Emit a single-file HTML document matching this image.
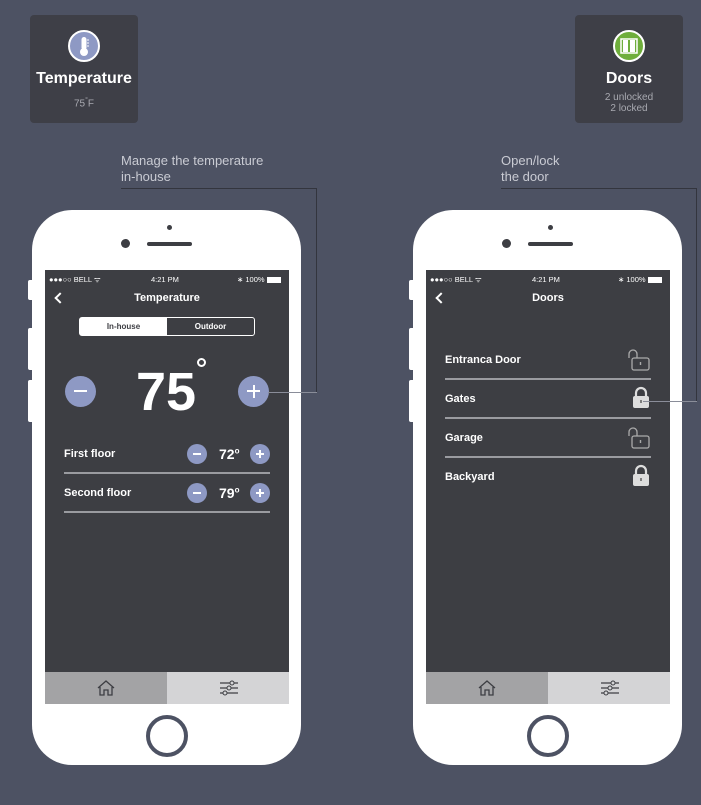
<!DOCTYPE html>
<html><head><meta charset="utf-8"><style>
*{margin:0;padding:0;box-sizing:border-box}
body{width:701px;height:805px;background:#4d5263;position:relative;overflow:hidden;font-family:"Liberation Sans",Arial,sans-serif;color:#fff}
.abs{position:absolute}
.card{position:absolute;top:15px;width:108px;height:108px;background:#3e3f47;border-radius:4px;text-align:center}
.card .ic{position:absolute;left:38px;top:15px;width:32px;height:32px;border-radius:50%;border:2px solid #fff}
.card .t{position:absolute;top:55px;width:100%;font-weight:bold;font-size:16px;line-height:18px}
.card .s{position:absolute;top:79px;width:100%;font-size:10px;color:#a8a9b0;line-height:11px}
.note{position:absolute;top:153px;font-size:13px;color:#c9cbd3;line-height:16px}
.line{position:absolute;background:#33353e}
.phone{position:absolute;top:210px;width:269px;height:555px;background:#fff;border-radius:40px}
.btn{position:absolute;width:4px;background:#fff;border-radius:2px 0 0 2px}
.screen{position:absolute;left:13px;top:60px;width:244px;height:434px;background:#3d3e43}
.sb{position:absolute;top:5px;font-size:7.5px;color:#fff}
.hdr{position:absolute;top:22px;width:100%;text-align:center;font-weight:bold;font-size:11px}
.back{position:absolute;left:11px;top:24px;width:8px;height:8px;border-left:2px solid #fff;border-bottom:2px solid #fff;transform:rotate(45deg)}
.tab{position:absolute;top:402px;height:32px;width:122px}
.home{position:absolute;left:114px;top:505px;width:42px;height:42px;border-radius:50%;border:4px solid #4d5263}
.circ{position:absolute;border-radius:50%;background:#8e99c4}
.row{position:absolute;left:19px;width:206px;font-weight:bold;font-size:11px}
.hr{position:absolute;left:19px;width:206px;height:2px;background:#9a9ba0}
</style></head><body>

<div class="card" style="left:30px">
 <div class="ic" style="background:#8e99c4">
  <svg width="28" height="28" viewBox="0 0 28 28"><rect x="11.5" y="5" width="5" height="13" rx="2.5" fill="#fff"/><circle cx="14" cy="20" r="4" fill="#fff"/><path d="M17 8h2M17 11h2M17 14h2" stroke="#fff" stroke-width="1"/></svg>
 </div>
 <div class="t">Temperature</div>
 <div class="s" style="top:80px">75<sup style="font-size:7px">°</sup>F</div>
</div>
<div class="card" style="left:575px">
 <div class="ic" style="background:#6fae3c">
  <svg width="28" height="28" viewBox="0 0 28 28"><rect x="6" y="7" width="16" height="14" fill="none" stroke="#fff" stroke-width="1.5"/><rect x="8" y="8" width="5" height="12" fill="#fff"/><rect x="15" y="8" width="5" height="12" fill="#fff"/></svg>
 </div>
 <div class="t">Doors</div>
 <div class="s" style="top:77px">2 unlocked<br>2 locked</div>
</div>

<div class="note" style="left:121px">Manage the temperature<br>in-house</div>
<div class="note" style="left:501px">Open/lock<br>the door</div>
<div class="line" style="left:121px;top:188px;width:196px;height:1px"></div>
<div class="line" style="left:316px;top:188px;width:1px;height:205px"></div>
<div class="line" style="left:501px;top:188px;width:196px;height:1px"></div>
<div class="line" style="left:696px;top:188px;width:1px;height:214px"></div>

<!-- phone 1 -->
<div class="btn" style="left:28px;top:280px;height:20px"></div>
<div class="btn" style="left:28px;top:328px;height:42px"></div>
<div class="btn" style="left:28px;top:380px;height:42px"></div>
<div class="phone" style="left:32px">
 <div class="abs" style="left:135px;top:15px;width:5px;height:5px;border-radius:50%;background:#3d3e43"></div>
 <div class="abs" style="left:89px;top:29px;width:9px;height:9px;border-radius:50%;background:#3d3e43"></div>
 <div class="abs" style="left:115px;top:32px;width:45px;height:4px;border-radius:2px;background:#3d3e43"></div>
 <div class="screen">
  <div class="sb" style="left:4px">●●●○○ BELL ᯤ</div>
  <div class="sb" style="left:106px">4:21 PM</div>
  <div class="sb" style="left:192px">∗ 100% <span style="display:inline-block;width:14px;height:6px;background:#fff;vertical-align:middle"></span></div>
  <div class="back"></div>
  <div class="hdr">Temperature</div>
  <div class="abs" style="left:34px;top:47px;width:176px;height:19px;border:1px solid #fff;border-radius:3px;font-size:8px;font-weight:bold">
   <div class="abs" style="left:0;top:0;width:87px;height:17px;background:#fff;color:#3d3e43;text-align:center;line-height:17px">In-house</div>
   <div class="abs" style="left:87px;top:0;width:87px;height:17px;text-align:center;line-height:17px">Outdoor</div>
  </div>
  <div class="circ" style="left:20px;top:106px;width:31px;height:31px"><div class="abs" style="left:9px;top:14px;width:13px;height:2px;background:#fff"></div></div>
  <div class="circ" style="left:193px;top:106px;width:31px;height:31px"><div class="abs" style="left:9px;top:14px;width:13px;height:2px;background:#fff"></div><div class="abs" style="left:14.5px;top:9px;width:2px;height:13px;background:#fff"></div></div>
  <div class="abs" style="left:91px;top:92px;font-size:54px;font-weight:bold;line-height:60px">75</div>
  <div class="abs" style="left:152px;top:88px;width:9px;height:9px;border-radius:50%;border:2px solid #fff"></div>
  <div class="row" style="top:178px">First floor</div>
  <div class="circ" style="left:142px;top:174px;width:20px;height:20px"><div class="abs" style="left:6px;top:9px;width:8px;height:2px;background:#fff"></div></div>
  <div class="abs" style="left:174px;top:176px;font-size:14px;font-weight:bold">72<sup style="font-size:8px">o</sup></div>
  <div class="circ" style="left:205px;top:174px;width:20px;height:20px"><div class="abs" style="left:6px;top:9px;width:8px;height:2px;background:#fff"></div><div class="abs" style="left:9px;top:6px;width:2px;height:8px;background:#fff"></div></div>
  <div class="hr" style="top:202px"></div>
  <div class="row" style="top:217px">Second floor</div>
  <div class="circ" style="left:142px;top:213px;width:20px;height:20px"><div class="abs" style="left:6px;top:9px;width:8px;height:2px;background:#fff"></div></div>
  <div class="abs" style="left:174px;top:215px;font-size:14px;font-weight:bold">79<sup style="font-size:8px">o</sup></div>
  <div class="circ" style="left:205px;top:213px;width:20px;height:20px"><div class="abs" style="left:6px;top:9px;width:8px;height:2px;background:#fff"></div><div class="abs" style="left:9px;top:6px;width:2px;height:8px;background:#fff"></div></div>
  <div class="hr" style="top:241px"></div>
  <div class="tab" style="left:0;background:#a3a3a5"><svg class="abs" style="left:51px;top:8px" width="20" height="16" viewBox="0 0 20 16"><path d="M2 8L10 1L18 8M4 7V15H8V10H12V15H16V7" fill="none" stroke="#3d3e43" stroke-width="1.3"/></svg></div>
  <div class="tab" style="left:122px;background:#d4d4d6"><svg class="abs" style="left:52px;top:8px" width="20" height="16" viewBox="0 0 20 16"><path d="M1 3H19M1 8H19M1 13H19" stroke="#3d3e43" stroke-width="1.3"/><circle cx="13" cy="3" r="2" fill="#d4d4d6" stroke="#3d3e43"/><circle cx="10" cy="8" r="2" fill="#d4d4d6" stroke="#3d3e43"/><circle cx="6" cy="13" r="2" fill="#d4d4d6" stroke="#3d3e43"/></svg></div>
 </div>
 <div class="home"></div>
</div>
<div class="line" style="left:268px;top:392px;width:49px;height:1px;background:#8a8d99"></div>

<!-- phone 2 -->
<div class="btn" style="left:409px;top:280px;height:20px"></div>
<div class="btn" style="left:409px;top:328px;height:42px"></div>
<div class="btn" style="left:409px;top:380px;height:42px"></div>
<div class="phone" style="left:413px">
 <div class="abs" style="left:135px;top:15px;width:5px;height:5px;border-radius:50%;background:#3d3e43"></div>
 <div class="abs" style="left:89px;top:29px;width:9px;height:9px;border-radius:50%;background:#3d3e43"></div>
 <div class="abs" style="left:115px;top:32px;width:45px;height:4px;border-radius:2px;background:#3d3e43"></div>
 <div class="screen">
  <div class="sb" style="left:4px">●●●○○ BELL ᯤ</div>
  <div class="sb" style="left:106px">4:21 PM</div>
  <div class="sb" style="left:192px">∗ 100% <span style="display:inline-block;width:14px;height:6px;background:#fff;vertical-align:middle"></span></div>
  <div class="back"></div>
  <div class="hdr">Doors</div>
  <div class="row" style="top:84px">Entranca Door</div>
  <svg class="abs" style="left:200px;top:77px" width="26" height="26" viewBox="0 0 26 26"><path d="M3 11V7a4 4 0 0 1 8 0v4" fill="none" stroke="#aaa" stroke-width="1.3"/><rect x="6" y="11" width="17" height="12" rx="2" fill="none" stroke="#aaa" stroke-width="1.3"/><rect x="13.8" y="15" width="1.4" height="3" fill="#aaa"/></svg>
  <div class="hr" style="top:108px"></div>
  <div class="row" style="top:123px">Gates</div>
  <svg class="abs" style="left:205px;top:116px" width="20" height="24" viewBox="0 0 20 24"><path d="M5 11V7a5 5 0 0 1 10 0v4" fill="none" stroke="#ddd" stroke-width="2.2"/><rect x="2" y="10" width="16" height="12" rx="2" fill="#ddd"/><rect x="9.3" y="14" width="1.4" height="3" fill="#555"/></svg>
  <div class="hr" style="top:147px"></div>
  <div class="row" style="top:162px">Garage</div>
  <svg class="abs" style="left:200px;top:155px" width="26" height="26" viewBox="0 0 26 26"><path d="M3 11V7a4 4 0 0 1 8 0v4" fill="none" stroke="#aaa" stroke-width="1.3"/><rect x="6" y="11" width="17" height="12" rx="2" fill="none" stroke="#aaa" stroke-width="1.3"/><rect x="13.8" y="15" width="1.4" height="3" fill="#aaa"/></svg>
  <div class="hr" style="top:186px"></div>
  <div class="row" style="top:201px">Backyard</div>
  <svg class="abs" style="left:205px;top:194px" width="20" height="24" viewBox="0 0 20 24"><path d="M5 11V7a5 5 0 0 1 10 0v4" fill="none" stroke="#ddd" stroke-width="2.2"/><rect x="2" y="10" width="16" height="12" rx="2" fill="#ddd"/><rect x="9.3" y="14" width="1.4" height="3" fill="#555"/></svg>
  <div class="tab" style="left:0;background:#a3a3a5"><svg class="abs" style="left:51px;top:8px" width="20" height="16" viewBox="0 0 20 16"><path d="M2 8L10 1L18 8M4 7V15H8V10H12V15H16V7" fill="none" stroke="#3d3e43" stroke-width="1.3"/></svg></div>
  <div class="tab" style="left:122px;background:#d4d4d6"><svg class="abs" style="left:52px;top:8px" width="20" height="16" viewBox="0 0 20 16"><path d="M1 3H19M1 8H19M1 13H19" stroke="#3d3e43" stroke-width="1.3"/><circle cx="13" cy="3" r="2" fill="#d4d4d6" stroke="#3d3e43"/><circle cx="10" cy="8" r="2" fill="#d4d4d6" stroke="#3d3e43"/><circle cx="6" cy="13" r="2" fill="#d4d4d6" stroke="#3d3e43"/></svg></div>
 </div>
 <div class="home"></div>
</div>
<div class="line" style="left:643px;top:401px;width:54px;height:1px;background:#8a8d99"></div>
</body></html>
